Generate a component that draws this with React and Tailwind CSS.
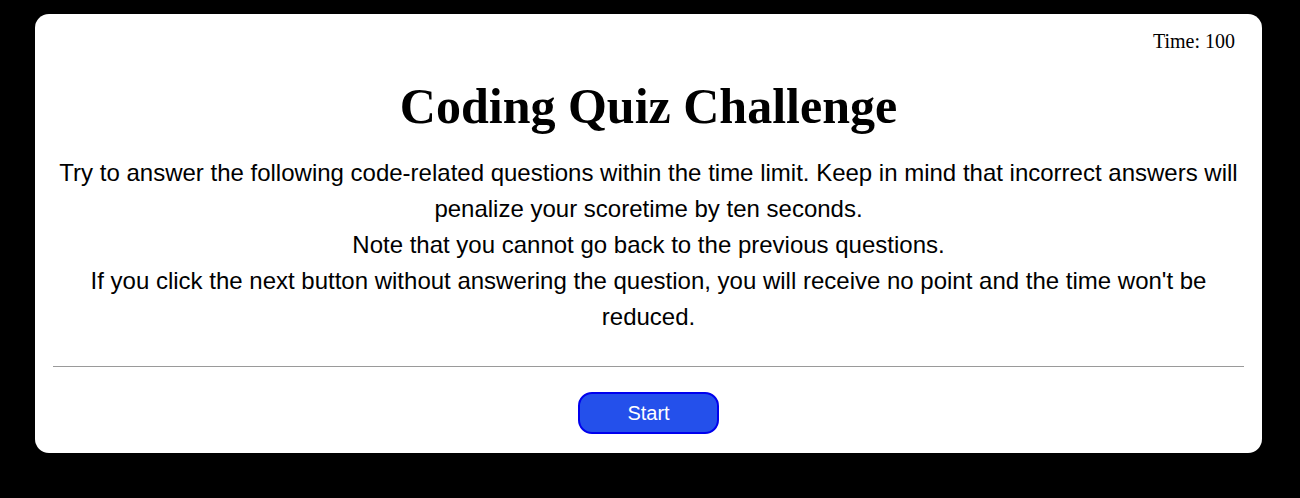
export default function App() {
  return (
    <div className="min-h-[498px] bg-black pt-[14px] pl-[35px]">
      <div className="w-[1227px] h-[439px] bg-white rounded-[14px] px-[18px] pt-[16px] flex flex-col">
        <div className="text-right pr-[9px] text-[20px] leading-[23px] text-black" style={{ fontFamily: '"Liberation Serif", serif' }}>
          Time: 100
        </div>
        <h1 className="mt-[24px] text-center font-bold text-[50px] leading-[58px] text-black" style={{ fontFamily: '"Liberation Serif", serif' }}>
          Coding Quiz Challenge
        </h1>
        <div className="mt-[20px] text-center text-[24px] leading-[36px] text-black px-[2px]" style={{ fontFamily: '"Liberation Sans", Arial, sans-serif' }}>
          <p>
            Try to answer the following code-related questions within the time limit. Keep in mind that incorrect answers will
            penalize your scoretime by ten seconds.
          </p>
          <p>Note that you cannot go back to the previous questions.</p>
          <p>
            If you click the next button without answering the question, you will receive no point and the time won't be
            reduced.
          </p>
        </div>
        <hr className="mt-[31px] border-t border-[#9a9a9a]" />
        <div className="flex justify-center pt-[25px]">
          <button
            className="w-[141px] h-[42px] rounded-[14px] border-2 border-[#0000ee] bg-[#2450eb] text-white text-[20px]"
            style={{ fontFamily: '"Liberation Sans", Arial, sans-serif' }}
          >
            Start
          </button>
        </div>
      </div>
    </div>
  );
}
